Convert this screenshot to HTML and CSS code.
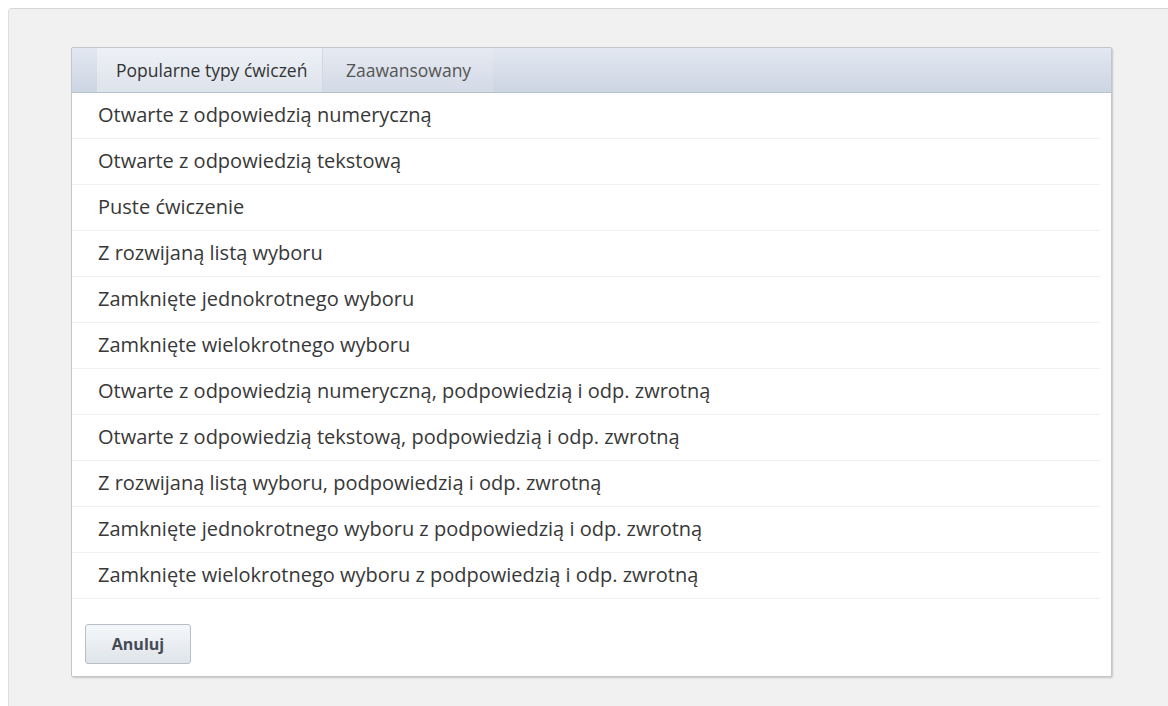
FILE: index.html
```html
<!DOCTYPE html>
<html lang="pl">
<head>
<meta charset="utf-8">
<title>Nowe ćwiczenie</title>
<link rel="stylesheet" href="styles.css">
</head>
<body>
<div class="page">
  <div class="dialog">
    <div class="tabs">
      <div class="tab active">Popularne typy ćwiczeń</div>
      <div class="tab">Zaawansowany</div>
    </div>
    <ul class="types">
      <li>Otwarte z odpowiedzią numeryczną</li>
      <li>Otwarte z odpowiedzią tekstową</li>
      <li>Puste ćwiczenie</li>
      <li>Z rozwijaną listą wyboru</li>
      <li>Zamknięte jednokrotnego wyboru</li>
      <li>Zamknięte wielokrotnego wyboru</li>
      <li>Otwarte z odpowiedzią numeryczną, podpowiedzią i odp. zwrotną</li>
      <li>Otwarte z odpowiedzią tekstową, podpowiedzią i odp. zwrotną</li>
      <li>Z rozwijaną listą wyboru, podpowiedzią i odp. zwrotną</li>
      <li>Zamknięte jednokrotnego wyboru z podpowiedzią i odp. zwrotną</li>
      <li>Zamknięte wielokrotnego wyboru z podpowiedzią i odp. zwrotną</li>
    </ul>
    <div class="actions">
      <button class="btn">Anuluj</button>
    </div>
  </div>
</div>
</body>
</html>
```
FILE: styles.css
```css
html, body {
  margin: 0;
  padding: 0;
  background: #ffffff;
  font-family: "Open Sans", "Liberation Sans", sans-serif;
}

body {
  padding: 8px 0 0 8px;
  height: 706px;
  box-sizing: border-box;
  overflow: hidden;
}

.page {
  background: #f1f1f1;
  border-top: 1px solid #d6d6d6;
  border-left: 1px solid #dedede;
  border-top-left-radius: 4px;
  height: 720px;
  padding: 38px 0 0 62px;
  box-sizing: border-box;
}

.dialog {
  width: 1041px;
  background: #ffffff;
  border: 1px solid #c3c6cb;
  border-radius: 2px;
  box-shadow: 1px 1px 2px rgba(0, 0, 0, 0.18);
  box-sizing: border-box;
}

.tabs {
  display: flex;
  height: 44px;
  padding-left: 25px;
  background: linear-gradient(#e3e8f1, #cdd5e3);
  border-bottom: 1px solid #b9c1cd;
}

.tab {
  display: flex;
  align-items: center;
  white-space: nowrap;
  font-size: 17.5px;
  color: #4a4a4a;
  box-sizing: border-box;
}

.tab.active {
  width: 226px;
  padding-left: 19px;
  background: linear-gradient(#eef1f6, #dde3ec);
  border-right: 1px solid #d3d9e3;
  color: #333333;
}

.tab + .tab {
  width: 170px;
  padding-left: 23px;
  color: #555555;
  background: linear-gradient(#e6eaf2, #d3dae6);
}

.types {
  list-style: none;
  margin: 0;
  padding: 0 11px 0 0;
}

.types li {
  height: 46px;
  box-sizing: border-box;
  line-height: 44px;
  padding-left: 26px;
  font-size: 20px;
  color: #383838;
  border-bottom: 1px solid #f0f0f0;
}

.actions {
  padding: 25px 0 12px 13px;
}

.btn {
  width: 106px;
  height: 40px;
  font-family: "Open Sans", "Liberation Sans", sans-serif;
  font-size: 16px;
  font-weight: bold;
  color: #444b56;
  background: linear-gradient(#f5f7fa, #dfe4ea);
  border: 1px solid #b8bec6;
  border-radius: 3px;
  padding: 0;
}
```
